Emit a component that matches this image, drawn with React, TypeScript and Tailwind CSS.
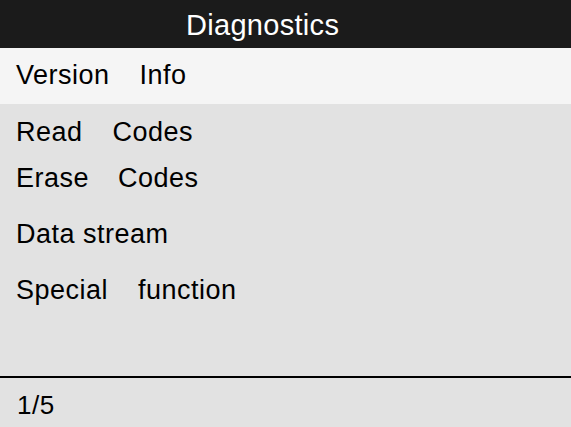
export default function App() {
  const font = { fontFamily: '"Liberation Sans", Arial, sans-serif' };
  return (
    <div
      className="w-[571px] h-[427px] flex flex-col bg-[#e2e2e2] text-black overflow-hidden"
      style={font}
    >
      <div className="h-[48px] shrink-0 bg-[#1b1b1b] text-white text-[29px] leading-[29px] tracking-[0.3px] pt-[11px] pl-[186px]">
        Diagnostics
      </div>
      <div className="h-[56px] shrink-0 bg-[#f5f5f5] pt-[14px] pl-[16px] text-[27px] leading-[27px] tracking-[0.5px]">
        <span>Version</span>
        <span className="ml-[30px]">Info</span>
      </div>
      <div className="flex-1 flex flex-col pl-[16px] text-[27px] leading-[27px] tracking-[0.5px]">
        <div className="mt-[15px]">
          <span>Read</span>
          <span className="ml-[30px]">Codes</span>
        </div>
        <div className="mt-[19px]">
          <span>Erase</span>
          <span className="ml-[29px]">Codes</span>
        </div>
        <div className="mt-[29px]">Data stream</div>
        <div className="mt-[29px]">
          <span>Special</span>
          <span className="ml-[30px]">function</span>
        </div>
      </div>
      <div className="h-[51px] shrink-0 border-t-2 border-black pt-[14px] pl-[17px] text-[26px] leading-[26px] tracking-[0.5px]">
        1/5
      </div>
    </div>
  );
}
